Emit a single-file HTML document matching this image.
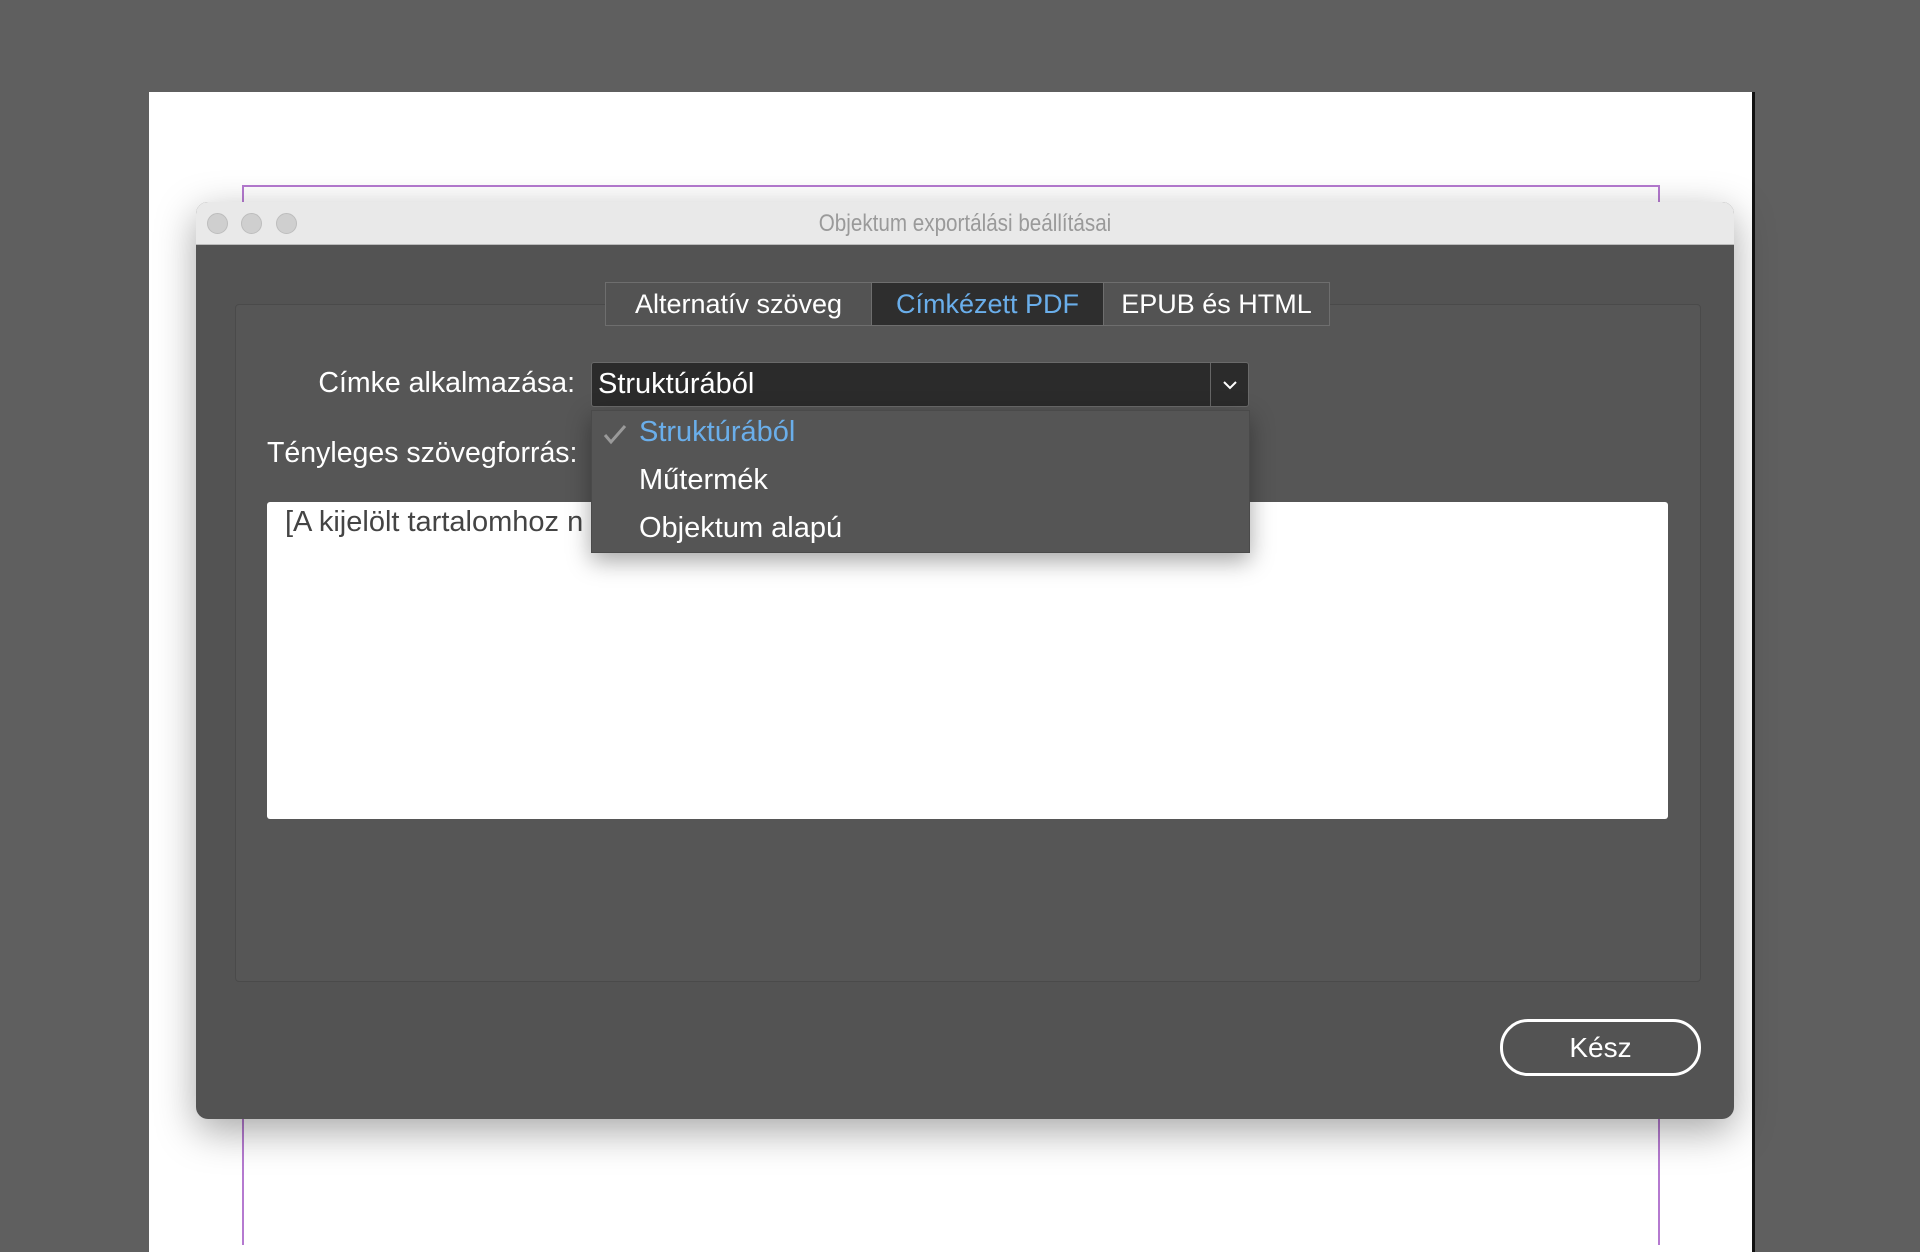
<!DOCTYPE html>
<html><head><meta charset="utf-8"><style>
*{margin:0;padding:0;box-sizing:border-box}
body{width:1920px;height:1239px;background:#5f5f5f;position:relative;overflow:hidden;font-family:"Liberation Sans",sans-serif}
.abs{position:absolute}
.page{left:149px;top:92px;width:1606px;height:1160px;background:#fff;border-right:3px solid #111}
.mg{background:#b57ad0}
.dlg{left:196px;top:202px;width:1538px;height:917px;background:#535353;border-radius:12px;box-shadow:0 12px 40px rgba(0,0,0,.35);overflow:hidden}
.tb{left:0;top:0;width:100%;height:43px;background:#e9e9e9;border-bottom:1px solid #bbb}
.dot{width:21px;height:21px;border-radius:50%;background:#cfcfcf;border:1px solid #bdbdbd;top:11px}
.title{left:0;width:100%;top:8px;text-align:center;color:#9a9a9a;font-size:24px;transform:scaleX(.86)}
.panel{left:39px;top:102px;width:1466px;height:678px;border:1px solid #4a4a4a;border-radius:4px;background:#565656}
.tabs{left:409px;top:80px;height:44px;display:flex;border:1px solid #6e6e6e;background:#535353}
.tab{height:42px;line-height:42px;color:#fff;font-size:27px;padding:0 10px;border-right:1px solid #6e6e6e;white-space:nowrap}
.tab.a{background:#2e2e2e;color:#6aaeea}
.tab:last-child{border-right:0}
.lbl{color:#fff;font-size:28.5px;white-space:nowrap}
.dd{left:395px;top:160px;width:658px;height:45px;background:#2b2b2b;border:1px solid #6a6a6a;border-radius:3px;color:#fff;font-size:29px;line-height:42px;padding-left:6px}
.arr{right:0;top:0;width:38px;height:43px;border-left:1px solid #666}
.menu{left:395px;top:208px;width:659px;height:143px;background:#555;box-shadow:0 8px 22px rgba(0,0,0,.35);border:1px solid #4a4a4a}
.mi{left:47px;color:#fff;font-size:29px;white-space:nowrap}
.ta{left:71px;top:300px;width:1401px;height:317px;background:#fff;border-radius:3px}
.btn{left:1304px;top:817px;width:201px;height:57px;border:3px solid #fff;border-radius:28px;color:#fff;font-size:28px;text-align:center;line-height:51px}
</style></head><body>
<div class="abs page"></div>
<div class="abs mg" style="left:242px;top:185px;width:1418px;height:2px"></div>
<div class="abs mg" style="left:242px;top:185px;width:2px;height:1060px"></div>
<div class="abs mg" style="left:1658px;top:185px;width:2px;height:1060px"></div>
<div class="abs dlg">
 <div class="abs tb">
  <div class="abs dot" style="left:11px"></div>
  <div class="abs dot" style="left:45px"></div>
  <div class="abs dot" style="left:80px"></div>
  <div class="abs title">Objektum exportálási beállításai</div>
 </div>
 <div class="abs panel"></div>
 <div class="abs tabs">
  <div class="tab" style="width:266px;text-align:center">Alternatív szöveg</div>
  <div class="tab a" style="width:232px;text-align:center">Címkézett PDF</div>
  <div class="tab" style="width:225px;text-align:center">EPUB és HTML</div>
 </div>
 <div class="abs lbl" style="right:1159px;top:165px">Címke alkalmazása:</div>
 <div class="abs lbl" style="left:71px;top:235px">Tényleges szövegforrás:</div>
 <div class="abs ta"><div class="abs" style="left:18px;top:4px;color:#444;font-size:29px;white-space:nowrap">[A kijelölt tartalomhoz n</div></div>
 <div class="abs dd"><span>Struktúrából</span>
  <div class="abs arr"><svg width="38" height="43" viewBox="0 0 38 43"><path d="M13 19l6 6 6-6" fill="none" stroke="#fff" stroke-width="2"/></svg></div>
 </div>
 <div class="abs menu">
  <svg class="abs" style="left:10px;top:12px" width="26" height="22" viewBox="0 0 26 22"><path d="M3 12l6 7L23 3" fill="none" stroke="#9a9a9a" stroke-width="3"/></svg>
  <div class="abs mi" style="top:5px;color:#6aaeea">Struktúrából</div>
  <div class="abs mi" style="top:53px">Műtermék</div>
  <div class="abs mi" style="top:101px">Objektum alapú</div>
 </div>
 <div class="abs btn">Kész</div>
</div>
</body></html>
